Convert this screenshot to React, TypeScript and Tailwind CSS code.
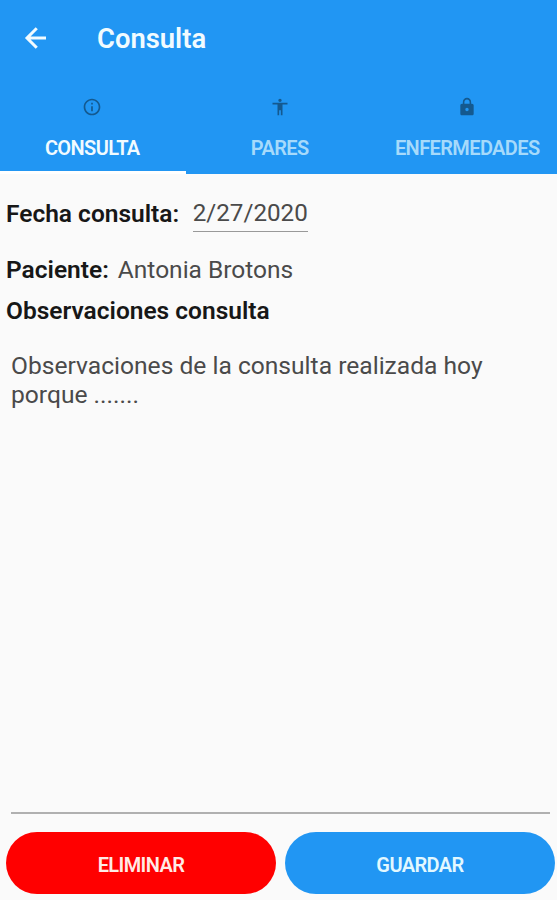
import { ReactNode } from 'react';
import { MdInfoOutline, MdAccessibility, MdLock } from 'react-icons/md';

interface TabProps {
  icon: ReactNode;
  label: string;
  active?: boolean;
}

interface ActionButtonProps {
  label: string;
  className: string;
}

function BackArrow() {
  return (
    <svg
      width="30"
      height="30"
      viewBox="0 0 24 24"
      fill="none"
      stroke="currentColor"
      strokeWidth="2.4"
    >
      <path d="M20 12H5.2M12.6 4.2L4.8 12l7.8 7.8" />
    </svg>
  );
}

function Tab({ icon, label, active = false }: TabProps) {
  return (
    <button
      className={`flex w-[187.5px] shrink-0 flex-col items-center border-b-[3px] pt-[22px] text-[20px] font-semibold tracking-[-0.6px] ${
        active ? 'border-white text-[#f1fbff]' : 'border-transparent text-[#a6dafb]'
      }`}
    >
      <span className="text-[#14598f]">{icon}</span>
      <span className="mt-[19px] leading-[24px] whitespace-nowrap">{label}</span>
    </button>
  );
}

function ActionButton({ label, className }: ActionButtonProps) {
  return (
    <button className={`h-[62px] flex-1 rounded-full pt-[3px] text-[20px] font-semibold tracking-[-0.6px] ${className}`}>
      {label}
    </button>
  );
}

const tabs: TabProps[] = [
  { icon: <MdInfoOutline size={20} />, label: 'CONSULTA', active: true },
  { icon: <MdAccessibility size={20} />, label: 'PARES' },
  { icon: <MdLock size={20} />, label: 'ENFERMEDADES' },
];

export default function App() {
  return (
    <div className="flex h-[900px] w-[557px] flex-col overflow-hidden bg-[#fafafa] font-['Roboto',sans-serif] text-[#4a4a4a]">
      <header className="h-[174px] bg-[#2196f3] text-[#f1fbff]">
        <div className="flex h-[75px] items-center pl-[21px]">
          <BackArrow />
          <h1 className="ml-[46px] pt-[4px] text-[27.4px] font-semibold">Consulta</h1>
        </div>
        <nav className="-ml-[1.5px] flex h-[99px]">
          {tabs.map((tab) => (
            <Tab key={tab.label} {...tab} />
          ))}
        </nav>
      </header>

      <main className="flex flex-1 flex-col px-[6px] text-[24.5px]">
        <div className="mt-[24px] flex h-[34px] leading-[31px]">
          <span className="font-semibold text-[#171717]">Fecha consulta:</span>
          <span className="ml-[13.5px] border-b border-[#999] text-[24.2px]">2/27/2020</span>
        </div>
        <div className="mt-[22px] leading-[31px]">
          <span className="font-semibold text-[#171717]">Paciente:</span>
          <span className="ml-[9px]">Antonia Brotons</span>
        </div>
        <h2 className="mt-[10px] font-semibold leading-[31px] text-[#171717]">Observaciones consulta</h2>
        <p className="mt-[25px] mr-[1px] ml-[5px] flex-1 border-b-2 border-[#b0b0b0] text-[24.6px] leading-[29px]">
          Observaciones de la consulta realizada hoy porque .......
        </p>
      </main>

      <footer className="mt-[18px] mb-[6px] flex gap-[9px] pr-[2px] pl-[6px]">
        <ActionButton label="ELIMINAR" className="bg-[#ff0000] text-[#ffebe6]" />
        <ActionButton label="GUARDAR" className="bg-[#2196f3] text-[#e2f8ff]" />
      </footer>
    </div>
  );
}
